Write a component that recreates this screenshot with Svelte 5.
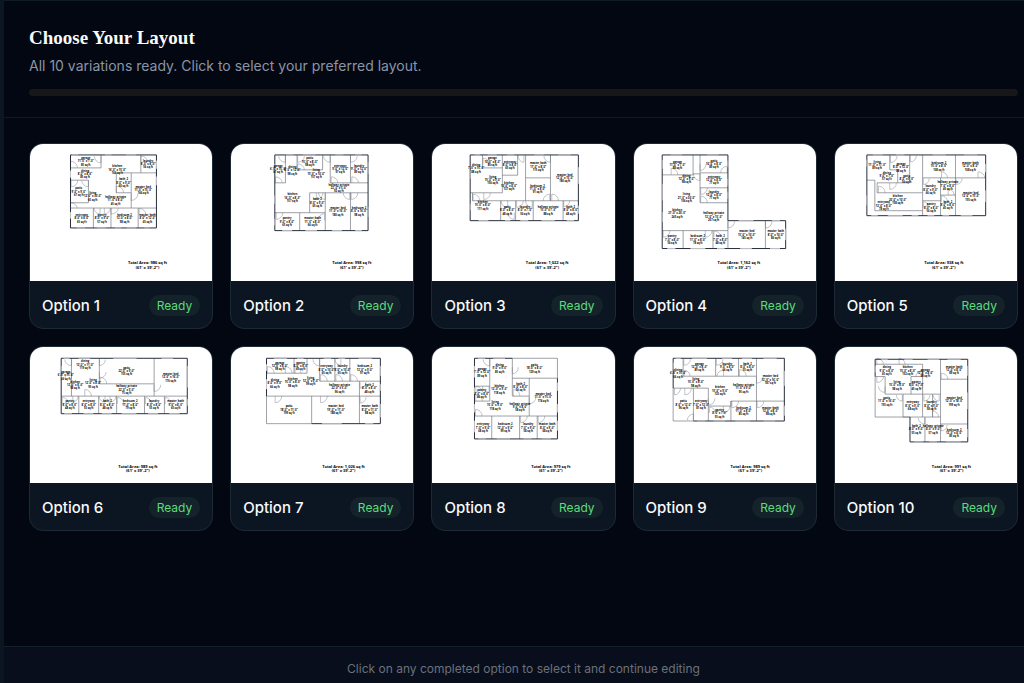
<script>
  // rooms: [x, y, name, size, area], doors: [hinge x, hinge y, dx, dy]
  const plans = [
    {
      view: '29 10 549 412',
      outer: 'M151 43H410V263H151Z',
      windows: 'M155 43H175M255 43H275M318 43H348M151 90V112M151 215V235M410 60V85M410 108V134M170 263H195M230 263H258M285 263H305M320 263H348M373 263H390',
      walls: 'M151 82H243V43M151 119H205V187H151M363 43V97H410M289 97H363M289 97V157H334M334 97V203M151 203H410M220 203V263M273 203V263M355 203V263',
      doors: [[243, 47, -20, 20], [151, 82, 21, -20], [153, 119, 20, 20], [205, 119, -20, 20], [363, 64, 20, -18], [289, 157, 22, -20], [334, 160, 20, 20], [151, 203, 20, -16], [240, 203, -18, 18], [253, 203, 18, 18], [273, 203, 22, 18], [358, 222, 20, -18]],
      rooms: [[197, 62, 'garage', `11'-0" x 7'-0"`, '85 sq ft'], [195, 100, 'dining', `8'-0" x 8'-6"`, '85 sq ft'], [292, 87, 'kitchen', `16'-0" x 15'-0"`, '166 sq ft'], [385, 70, 'laundry', `8'-0" x 8'-0"`, '56 sq ft'], [311, 127, 'bath_2', `8'-0" x 9'-0"`, '60 sq ft'], [370, 149, 'master_bed', `11'-0" x 15'-0"`, '166 sq ft'], [176, 154, 'patio', `9'-0" x 9'-0"`, '67 sq ft'], [218, 168, 'living', `12'-0" x 30'-0"`, '65 sq ft'], [287, 180, 'hallway_private', `11'-0" x 8'-0"`, '45 sq ft'], [185, 234, 'entryway', `8'-0" x 8'-0"`, '65 sq ft'], [246, 234, 'pantry', `8'-0" x 9'-0"`, '57 sq ft'], [314, 234, 'bedroom_2', `12'-0" x 8'-0"`, '98 sq ft'], [383, 234, 'master_bath', `8'-0" x 12'-0"`, '65 sq ft']],
      total: [383, 373, '986']
    },
    {
      view: '16 10 549 412',
      outer: 'M148 43H429V271H148Z',
      windows: 'M182 43H205M232 43H270M330 43H355M390 43H410M148 70V90M148 165V190M148 235V255M429 65V100M429 200V230M170 271H200M240 271H275M320 271H350M390 271H410',
      walls: 'M148 127H180V43M215 43V88H292V43M315 43V127M315 127H429M376 43V127M253 217V157H429M148 217H300M300 157V271M223 217V271M376 157V271',
      doors: [[180, 47, -20, 18], [150, 127, 20, -18], [217, 47, 20, 18], [217, 88, 20, -18], [315, 47, -20, 18], [318, 127, 20, -18], [376, 47, 20, 18], [380, 127, 20, -18], [273, 157, 20, 20], [300, 157, -20, 20], [374, 157, -20, 20], [378, 157, 20, 20], [152, 217, 20, 20], [298, 240, -20, -20]],
      rooms: [[158, 85, 'garage', `6'-0" x 15'-0"`, '67 sq ft'], [201, 89, 'dining', `8'-0" x 12'-0"`, '98 sq ft'], [253, 63, 'patio', `15'-0" x 8'-0"`, '98 sq ft'], [273, 99, 'living', `15'-0" x 10'-0"`, '157 sq ft'], [345, 85, 'entryway', `9'-0" x 12'-0"`, '97 sq ft'], [402, 85, 'laundry', `9'-0" x 12'-0"`, '89 sq ft'], [341, 143, 'hallway_private', `22'-0" x 5'-0"`, '92 sq ft'], [201, 172, 'kitchen', `16'-0" x 8'-0"`, '157 sq ft'], [276, 187, 'bath_2', `8'-0" x 9'-0"`, '65 sq ft'], [338, 213, 'master_bed', `11'-0" x 16'-0"`, '180 sq ft'], [402, 213, 'bedroom_2', `8'-0" x 16'-0"`, '98 sq ft'], [185, 244, 'pantry', `9'-0" x 8'-0"`, '65 sq ft'], [262, 244, 'master_bath', `11'-0" x 8'-0"`, '66 sq ft']],
      total: [380, 373, '998']
    },
    {
      view: '20 10 549 412',
      outer: 'M135 43H461V241H135Z',
      windows: 'M148 43H165M188 43H215M246 43H268M328 43H358M400 43H438M135 90V115M135 190V210M461 80V130M461 196V220M160 241H190M240 241H256M286 241H310M350 241H390M426 241H448',
      walls: 'M172 43V82H232M232 43V157M135 157H232M278 43V104H232M302 43V181M377 43V181M302 112H377M142 181H461M142 181V157M227 181V241M272 181V241M325 181V241M415 181V241',
      doors: [[174, 72, 18, -20], [297, 45, -18, 20], [377, 45, -20, 20], [144, 181, 20, -20], [176, 157, 20, 20], [375, 181, -20, -20], [381, 181, 20, -20], [248, 181, -20, 20], [268, 217, -20, 20], [275, 181, 20, 20], [322, 181, -20, 20], [417, 181, 18, 18]],
      rooms: [[153, 83, 'dining', `7'-0" x 15'-0"`, '88 sq ft'], [202, 63, 'garage', `10'-0" x 8'-0"`, '85 sq ft'], [255, 73, 'entryway', `8'-0" x 8'-0"`, '65 sq ft'], [203, 119, 'living', `15'-0" x 9'-0"`, '156 sq ft'], [252, 137, 'kitchen', `10'-0" x 8'-0"`, '137 sq ft'], [340, 78, 'master_bath', `11'-0" x 8'-0"`, '115 sq ft'], [338, 146, 'bedroom_2', `11'-0" x 8'-0"`, '91 sq ft'], [420, 112, 'master_bed', `12'-0" x 15'-0"`, '180 sq ft'], [173, 195, 'kitchen', `15'-0" x 8'-0"`, '111 sq ft'], [247, 210, 'patio', `8'-0" x 8'-0"`, '48 sq ft'], [300, 210, 'laundry', `8'-0" x 7'-0"`, '50 sq ft'], [370, 210, 'hallway_private', `15'-0" x 7'-0"`, '88 sq ft'], [438, 210, 'bath_2', `8'-0" x 8'-0"`, '48 sq ft']],
      total: [367, 373, '1,022']
    },
    {
      view: '25 10 549 412',
      outer: 'M110 43H308V241H482V325H110Z',
      windows: 'M135 43H170M245 43H280M110 58V85M110 130V180M110 215V245M308 60V80M308 115V135M308 155V175M340 241H385M440 241H465M482 265V300M125 325H150M195 325H240M275 325H298M345 325H380M435 325H465',
      walls: 'M203 43V103H110M203 100H224M224 43V187H308M224 97H308M224 142H308M110 271H308M173 271V325M263 271V325M308 241V325M421 241V325',
      doors: [[137, 103, 20, -20], [224, 70, 18, 20], [306, 97, -20, -20], [224, 100, -20, 20], [226, 142, 20, 20], [226, 187, 20, -20], [240, 271, 20, 20], [308, 243, 20, 20], [421, 243, 20, 20], [113, 271, 20, 20], [266, 290, 20, -18]],
      rooms: [[156, 73, 'garage', `11'-0" x 7'-0"`, '88 sq ft'], [266, 70, 'patio', `10'-0" x 8'-0"`, '89 sq ft'], [183, 115, 'dining', `12'-0" x 9'-0"`, '98 sq ft'], [266, 119, 'entryway', `12'-0" x 8'-0"`, '77 sq ft'], [266, 164, 'laundry', `12'-0" x 8'-0"`, '77 sq ft'], [183, 172, 'living', `21'-0" x 30'-0"`, '156 sq ft'], [155, 219, 'kitchen', `21'-0" x 20'-0"`, '245 sq ft'], [265, 229, 'hallway_private', `12'-0" x 15'-0"`, '207 sq ft'], [140, 298, 'pantry', `7'-0" x 8'-0"`, '56 sq ft'], [217, 298, 'bedroom_2', `11'-0" x 8'-0"`, '78 sq ft'], [285, 298, 'bath_2', `7'-0" x 8'-0"`, '48 sq ft'], [365, 283, 'master_bed', `15'-0" x 10'-0"`, '145 sq ft'], [452, 283, 'master_bath', `8'-0" x 10'-0"`, '80 sq ft']],
      total: [341, 373, '1,162']
    },
    {
      view: '31 10 549 412',
      outer: 'M127 43H485V226H127Z',
      windows: 'M145 43H175M215 43H240M325 43H365M420 43H460M127 58V78M127 165V195M485 70V95M485 150V185M140 226H160M190 226H235M262 226H282M310 226H330M355 226H375M410 226H445',
      walls: 'M196 43V88H220V127H256V43M295 43V226M394 43V226M295 112H485M127 119H151V211H295M158 127V157H295M158 127H220M349 112V226M295 181H349M349 164H394',
      doors: [[198, 46, 20, 20], [258, 46, 18, 18], [196, 127, 20, 20], [162, 157, 20, -20], [352, 112, 18, -18], [462, 112, 20, -18], [297, 114, 18, 18], [372, 164, 18, -18], [396, 114, 18, 18], [297, 202, 18, -18], [352, 184, 18, -18]],
      rooms: [[158, 73, 'living', `11'-0" x 11'-0"`, '89 sq ft'], [230, 80, 'garage', `8'-0" x 12'-0"`, '88 sq ft'], [187, 107, 'dining', `9'-0" x 7'-0"`, '57 sq ft'], [247, 116, 'patio', `8'-0" x 9'-0"`, '56 sq ft'], [344, 77, 'bedroom_2', `15'-0" x 8'-0"`, '108 sq ft'], [439, 77, 'master_bath', `12'-0" x 8'-0"`, '108 sq ft'], [319, 148, 'laundry', `8'-0" x 9'-0"`, '66 sq ft'], [371, 136, 'hallway_private', `7'-0" x 8'-0"`, '45 sq ft'], [440, 168, 'master_bed', `12'-0" x 15'-0"`, '155 sq ft'], [220, 178, 'kitchen', `20'-0" x 10'-0"`, '158 sq ft'], [178, 196, 'entryway', `12'-0" x 8'-0"`, '78 sq ft'], [321, 202, 'pantry', `8'-0" x 8'-0"`, '56 sq ft'], [371, 194, 'bath_2', `8'-0" x 8'-0"`, '45 sq ft']],
      total: [359, 373, '938']
    },
    {
      view: '29 18 549 412',
      outer: 'M123 52H503V219H123Z',
      windows: 'M130 52H148M175 52H210M280 52H350M425 52H460M123 75V115M503 75V140M503 175V195M132 219H155M190 219H220M245 219H275M305 219H350M385 219H415M448 219H480',
      walls: 'M154 52V166M238 52V129M403 52V166M238 129H403M123 166H503M176 166V219M236 166V219M290 166V219M374 166V219M434 166V219',
      doors: [[154, 56, -20, 18], [154, 113, -20, -18], [238, 56, 18, 18], [238, 94, 20, 18], [240, 129, 20, -20], [403, 132, 20, 20], [194, 166, 20, -20], [126, 190, 20, -20], [158, 166, 16, 18], [255, 166, -18, 18], [270, 166, 18, 18], [292, 190, 20, -20], [377, 190, 18, -20], [436, 190, 18, -20]],
      rooms: [[195, 71, 'dining', `12'-0" x 11'-0"`, '119 sq ft'], [320, 90, 'patio', `22'-0" x 9'-0"`, '155 sq ft'], [453, 109, 'master_bed', `12'-0" x 16'-0"`, '176 sq ft'], [137, 103, 'garage', `6'-0" x 15'-0"`, '66 sq ft'], [165, 133, 'kitchen', `12'-0" x 8'-0"`, '98 sq ft'], [219, 128, 'living', `12'-0" x 8'-0"`, '95 sq ft'], [320, 147, 'hallway_private', `22'-0" x 5'-0"`, '75 sq ft'], [149, 192, 'pantry', `8'-0" x 8'-0"`, '48 sq ft'], [206, 192, 'entryway', `8'-0" x 8'-0"`, '55 sq ft'], [262, 192, 'bath_2', `8'-0" x 8'-0"`, '48 sq ft'], [331, 192, 'bedroom_2', `11'-0" x 8'-0"`, '79 sq ft'], [403, 192, 'laundry', `8'-0" x 8'-0"`, '55 sq ft'], [468, 192, 'master_bath', `9'-0" x 8'-0"`, '65 sq ft']],
      total: [354, 382, '989']
    },
    {
      view: '16 18 549 412',
      outer: 'M123 166V52H466V249H259',
      windows: 'M145 52H185M215 52H235M295 52H318M340 52H360M400 52H440M123 70V90M123 115V145M466 75V105M466 130V150M466 190V230M290 249H350M420 249H445',
      walls: 'M123 97H245V52M206 52V97M283 52V121M329 52V121M374 52V121M283 121H466M403 121V249M123 166H466M259 166V249M123 166V249H259',
      doors: [[126, 97, 20, -20], [180, 97, 20, -20], [209, 97, 18, -20], [283, 55, -20, 20], [286, 121, 20, -20], [347, 55, -18, 18], [332, 121, 20, -20], [377, 121, 20, -20], [149, 166, 20, 20], [286, 166, 20, 20], [405, 124, 18, 18], [405, 169, 18, 18]],
      rooms: [[163, 75, 'garage', `12'-0" x 8'-0"`, '98 sq ft'], [226, 75, 'pantry', `8'-0" x 8'-0"`, '45 sq ft'], [304, 86, 'entryway', `8'-0" x 10'-0"`, '65 sq ft'], [352, 86, 'laundry', `8'-0" x 10'-0"`, '65 sq ft'], [419, 86, 'bedroom_2', `12'-0" x 9'-0"`, '97 sq ft'], [148, 128, 'dining', `8'-0" x 9'-0"`, '66 sq ft'], [202, 125, 'kitchen', `15'-0" x 8'-0"`, '98 sq ft'], [256, 121, 'living', `12'-0" x 9'-0"`, '99 sq ft'], [343, 143, 'hallway_private', `22'-0" x 5'-0"`, '96 sq ft'], [433, 143, 'bath_2', `8'-0" x 8'-0"`, '48 sq ft'], [191, 207, 'patio', `18'-0" x 11'-0"`, '199 sq ft'], [332, 207, 'master_bed', `19'-0" x 11'-0"`, '188 sq ft'], [434, 207, 'master_bath', `8'-0" x 11'-0"`, '88 sq ft']],
      total: [355, 382, '1,026']
    },
    {
      view: '20 18 549 412',
      outer: 'M262 52H148V295H398V112',
      windows: 'M158 52H180M205 52H240M148 75V110M148 140V160M148 190V215M148 240V275M398 125V150M398 190V215M398 240V270M160 295H182M215 295H255M295 295H320M350 295H378',
      walls: 'M262 52H398V112M194 52V181M148 136H194M148 181H194M262 52V166H313M262 112H398M313 112V226M148 226H398M200 226V295M284 226V295M337 226V295',
      doors: [[194, 55, -20, 20], [152, 155, 20, -18], [192, 136, -20, 18], [152, 181, 20, -18], [262, 79, 18, 20], [265, 166, 20, -20], [313, 169, 20, 20], [151, 226, 20, -20], [287, 226, 20, 20], [340, 226, 20, 20]],
      rooms: [[171, 94, 'garage', `7'-0" x 12'-0"`, '89 sq ft'], [224, 82, 'dining', `9'-0" x 9'-0"`, '85 sq ft'], [329, 82, 'patio', `18'-0" x 8'-0"`, '129 sq ft'], [170, 159, 'pantry', `8'-0" x 8'-0"`, '46 sq ft'], [223, 146, 'kitchen', `12'-0" x 9'-0"`, '118 sq ft'], [287, 139, 'bath_2', `8'-0" x 8'-0"`, '56 sq ft'], [355, 170, 'master_bed', `11'-0" x 15'-0"`, '174 sq ft'], [210, 194, 'living', `15'-0" x 9'-0"`, '118 sq ft'], [285, 199, 'hallway_private', `9'-0" x 8'-0"`, '58 sq ft'], [174, 261, 'entryway', `7'-0" x 9'-0"`, '68 sq ft'], [241, 261, 'bedroom_2', `12'-0" x 9'-0"`, '99 sq ft'], [310, 261, 'laundry', `7'-0" x 9'-0"`, '58 sq ft'], [367, 261, 'master_bath', `8'-0" x 9'-0"`, '68 sq ft']],
      total: [378, 382, '979']
    },
    {
      view: '25 18 549 412',
      outer: 'M143 142V52H478V241H204',
      windows: 'M150 52H166M200 52H245M290 52H320M350 52H380M415 52H455M143 65V85M478 90V135M478 195V225M215 241H240M265 241H300M330 241H375M415 241H450',
      walls: 'M173 52V106H394M271 52V106M340 52V106M394 52V241M143 142H249V241M143 142V241H204M204 142V241M249 196H317V181H478M317 181V241',
      doors: [[175, 55, 20, 18], [176, 106, 18, -18], [273, 55, 20, 18], [295, 106, -20, -18], [343, 106, 20, -20], [394, 109, 20, 18], [147, 142, 18, 20], [178, 142, 20, 20], [249, 173, 20, 20], [204, 238, -18, -18], [252, 217, 18, -18], [294, 196, 20, 20], [320, 181, 20, 20], [396, 181, 20, 20]],
      rooms: [[158, 97, 'dining', `6'-0" x 15'-0"`, '66 sq ft'], [222, 78, 'garage', `12'-0" x 8'-0"`, '89 sq ft'], [306, 78, 'laundry', `9'-0" x 8'-0"`, '66 sq ft'], [367, 78, 'bath_2', `8'-0" x 8'-0"`, '55 sq ft'], [436, 116, 'master_bed', `12'-0" x 16'-0"`, '187 sq ft'], [211, 125, 'living', `15'-0" x 8'-0"`, '98 sq ft'], [284, 150, 'kitchen', `15'-0" x 9'-0"`, '125 sq ft'], [355, 143, 'hallway_private', `11'-0" x 9'-0"`, '95 sq ft'], [174, 192, 'patio', `8'-0" x 12'-0"`, '96 sq ft'], [227, 192, 'entryway', `7'-0" x 12'-0"`, '81 sq ft'], [283, 218, 'pantry', `8'-0" x 7'-0"`, '55 sq ft'], [355, 211, 'bedroom_2', `11'-0" x 8'-0"`, '85 sq ft'], [436, 211, 'master_bath', `12'-0" x 8'-0"`, '98 sq ft']],
      total: [375, 382, '989']
    },
    {
      view: '31 18 549 412',
      outer: 'M152 107V55H431V304H257V229',
      windows: 'M170 55H190M240 55H265M310 55H345M370 55H410M152 75V95M431 75V105M431 155V205M431 265V290M270 304H295M315 304H338M365 304H410',
      walls: 'M152 107V229H257M152 107H182M152 70H295V229M349 55V304M349 115H431M182 107V160H349M260 107V160M260 107H295M236 160V229H349M325 160V229M302 229V304M349 250H431',
      doors: [[157, 70, 20, -18], [224, 70, 18, -18], [295, 107, -20, -18], [295, 125, -18, 18], [157, 107, 20, 18], [182, 137, -20, 18], [351, 115, 20, -18], [234, 163, -18, 18], [299, 163, 18, 18], [345, 163, -18, 18], [325, 229, 18, -18], [302, 232, -20, 18], [351, 253, 18, 18]],
      rooms: [[187, 89, 'dining', `9'-0" x 8'-0"`, '65 sq ft'], [250, 89, 'kitchen', `15'-0" x 8'-0"`, '152 sq ft'], [303, 96, 'garage', `12'-0" x 8'-0"`, '98 sq ft'], [390, 87, 'master_bath', `12'-0" x 8'-0"`, '89 sq ft'], [218, 134, 'living', `15'-0" x 8'-0"`, '98 sq ft'], [276, 134, 'pantry', `8'-0" x 7'-0"`, '45 sq ft'], [390, 182, 'master_bed', `12'-0" x 18'-0"`, '199 sq ft'], [187, 182, 'patio', `11'-0" x 16'-0"`, '155 sq ft'], [265, 195, 'entryway', `8'-0" x 9'-0"`, '68 sq ft'], [322, 195, 'laundry', `8'-0" x 9'-0"`, '58 sq ft'], [276, 266, 'bath_2', `8'-0" x 9'-0"`, '55 sq ft'], [327, 266, 'hallway_private', `8'-0" x 9'-0"`, '57 sq ft'], [390, 277, 'bedroom_2', `12'-0" x 8'-0"`, '85 sq ft']],
      total: [382, 382, '991']
    }
  ];

  let selected = $state(null);

  function doorPath([x, y, dx, dy]) {
    const sweep = dx * dy > 0 ? 0 : 1;
    return `M${x} ${y}v${dy}A${Math.abs(dx)} ${Math.abs(dy)} 0 0 ${sweep} ${x + dx} ${y}`;
  }
</script>

<div class="page">
  <main class="panel">
    <header>
      <h1>Choose Your Layout</h1>
      <p>All 10 variations ready. Click to select your preferred layout.</p>
      <progress value="0" max="10" aria-label="Variations in progress"></progress>
    </header>

    <div class="grid">
      {#each plans as plan, i}
        <button class="card" aria-pressed={selected === i} onclick={() => (selected = i)}>
          <svg class="plan" viewBox={plan.view} aria-hidden="true">
            <path class="doors" d={plan.doors.map(doorPath).join('')} />
            <path class="walls" d={plan.walls} />
            <path class="outer" d={plan.outer} />
            <path class="windows" d={plan.windows} />
            {#each plan.rooms as [x, y, name, size, area]}
              <text class="room" {x} y={y - 7}>{name}</text>
              <text class="room" {x} y={y + 3}>{size}</text>
              <text class="room" {x} y={y + 13}>{area}</text>
            {/each}
            <text class="total" x={plan.total[0]} y={plan.total[1]}>Total Area: {plan.total[2]} sq ft</text>
            <text class="total" x={plan.total[0]} y={plan.total[1] + 13}>(61' x 39'-2")</text>
          </svg>
          <span class="card-foot">
            <span class="name">Option {i + 1}</span>
            <span class="badge">Ready</span>
          </span>
        </button>
      {/each}
    </div>

    <footer>Click on any completed option to select it and continue editing</footer>
  </main>
</div>

<style>
  :global(body) {
    background: #0b1622;
  }

  .page {
    overflow: hidden;
    padding-left: 4px;
    font-family: Inter, "Open Sans", sans-serif;
  }

  /* the panel runs on past the right edge of the window */
  .panel {
    display: flex;
    flex-direction: column;
    box-sizing: border-box;
    min-height: 100vh;
    margin-right: -19px;
    border-top: 1px solid #0f1a27;
    background: #030712;
  }

  header {
    padding: 24px 25px 21px;
    border-bottom: 1px solid #121925;
  }

  h1 {
    margin: 0;
    color: #fafafa;
    font-family: "Liberation Serif", serif;
    font-size: 19px;
    font-weight: 700;
    line-height: 26px;
  }

  p {
    margin: 4px 0 12px;
    color: #8b95a5;
    font-size: 14px;
    line-height: 22px;
  }

  progress {
    display: block;
    width: 100%;
    height: 7px;
    border: none;
    border-radius: 4px;
    overflow: hidden;
    background: #171717;
    appearance: none;
  }

  progress::-webkit-progress-bar {
    background: #171717;
  }

  .grid {
    display: grid;
    flex: 1;
    grid-template-columns: repeat(5, 1fr);
    align-content: start;
    gap: 17px;
    padding: 25px;
  }

  .card {
    display: flex;
    flex-direction: column;
    padding: 0;
    border: 1px solid #1d2a35;
    border-radius: 14px;
    overflow: hidden;
    background: #0c1522;
    color: #fafafa;
    font-family: inherit;
    text-align: left;
    cursor: pointer;
  }

  .card:hover {
    border-color: #4ade80;
  }

  .plan {
    display: block;
    width: 100%;
    background: #fff;
  }

  .plan path {
    fill: none;
  }

  .outer {
    stroke: #252b3a;
    stroke-width: 3;
  }

  .windows {
    stroke: #c3c5ca;
    stroke-width: 3;
  }

  .walls {
    stroke: #6e727b;
    stroke-width: 2;
  }

  .doors {
    stroke: #a4a6aa;
    stroke-width: 2;
  }

  .room,
  .total {
    fill: #000;
    font-family: "Open Sans", sans-serif;
    font-size: 8px;
    font-weight: 700;
    text-anchor: middle;
  }

  .total {
    font-size: 12px;
  }

  .card-foot {
    display: flex;
    justify-content: space-between;
    align-items: center;
    box-sizing: border-box;
    height: 47px;
    padding: 2px 12px 0;
  }

  .name {
    font-size: 15px;
    font-weight: 500;
  }

  .badge {
    padding: 0 8px;
    border-radius: 11px;
    background: #14232a;
    color: #5bdc7d;
    font-size: 12px;
    line-height: 21px;
  }

  footer {
    padding: 11px 25px 3px;
    border-top: 1px solid #14202c;
    background: #080e1b;
    color: #6b717c;
    font-size: 12px;
    line-height: 22px;
    text-align: center;
  }
</style>
